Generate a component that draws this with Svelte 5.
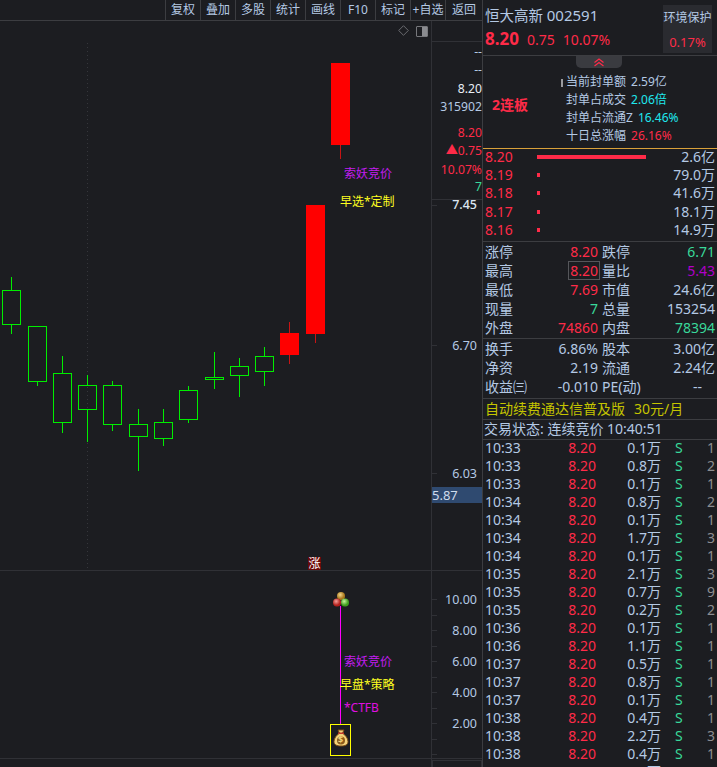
<script>
  // candles: x = left of body, top/bottom of body, hi/lo of wick
  const candles = [
    { x: 2, t: 290, b: 324, hi: 277, lo: 334 },
    { x: 28, t: 326, b: 381, hi: 326, lo: 386 },
    { x: 53, t: 373, b: 422, hi: 356, lo: 433 },
    { x: 78, t: 385, b: 409, hi: 375, lo: 442 },
    { x: 103, t: 385, b: 424, hi: 381, lo: 431 },
    { x: 129, t: 424, b: 436, hi: 409, lo: 471 },
    { x: 154, t: 422, b: 438, hi: 409, lo: 446 },
    { x: 179, t: 390, b: 419, hi: 386, lo: 423 },
    { x: 205, t: 377, b: 379, hi: 352, lo: 389 },
    { x: 230, t: 366, b: 375, hi: 358, lo: 397 },
    { x: 255, t: 356, b: 371, hi: 347, lo: 386 },
    { x: 280, t: 333, b: 355, hi: 322, lo: 364, up: true },
    { x: 306, t: 205, b: 334, hi: 205, lo: 343, up: true },
    { x: 331, t: 63, b: 145, hi: 63, lo: 159, up: true }
  ];

  const tools = ['复权', '叠加', '多股', '统计', '画线', 'F10', '标记', '+自选', '返回'];

  const axisInfo = [
    { y: 51, text: '--', cls: 'plain' },
    { y: 69, text: '--', cls: 'plain' },
    { y: 88, text: '8.20', cls: 'white' },
    { y: 106, text: '315902', cls: 'plain' },
    { y: 132, text: '8.20', cls: 'red' },
    { y: 150, text: '▲0.75', cls: 'red' },
    { y: 169, text: '10.07%', cls: 'red' },
    { y: 186, text: '7', cls: 'green' }
  ];
  const priceAxis = [
    { y: 204, text: '7.45', cls: 'bright' },
    { y: 345, text: '6.70', cls: '' },
    { y: 473, text: '6.03', cls: '' }
  ];
  const subAxis = [
    { y: 599, text: '10.00' },
    { y: 630, text: '8.00' },
    { y: 661, text: '6.00' },
    { y: 692, text: '4.00' },
    { y: 723, text: '2.00' }
  ];
  const subTicks = [599, 615, 630, 646, 661, 677, 692, 708, 723, 739, 754];

  const stats = [
    { label: '当前封单额', value: '2.59亿', cls: 'plain' },
    { label: '封单占成交', value: '2.06倍', cls: 'cyan' },
    { label: '封单占流通Z', value: '16.46%', cls: 'cyan' },
    { label: '十日总涨幅', value: '26.16%', cls: 'red' }
  ];

  const orders = [
    { price: '8.20', width: 109, vol: '2.6亿' },
    { price: '8.19', width: 3, vol: '79.0万' },
    { price: '8.18', width: 3, vol: '41.6万' },
    { price: '8.17', width: 3, vol: '18.1万' },
    { price: '8.16', width: 3, vol: '14.9万' }
  ];

  const quoteA = [
    ['涨停', '8.20', 'red', '跌停', '6.71', 'green'],
    ['最高', '8.20', 'red boxed', '量比', '5.43', 'violet'],
    ['最低', '7.69', 'red', '市值', '24.6亿', 'plain'],
    ['现量', '7', 'green', '总量', '153254', 'plain'],
    ['外盘', '74860', 'red', '内盘', '78394', 'green']
  ];
  const quoteB = [
    ['换手', '6.86%', 'plain', '股本', '3.00亿', 'plain'],
    ['净资', '2.19', 'plain', '流通', '2.24亿', 'plain'],
    ['收益㈢', '-0.010', 'plain', 'PE(动)', '--', 'plain dash']
  ];

  const ticks = [
    ['10:33', '0.1万', '1'], ['10:33', '0.8万', '2'], ['10:33', '0.1万', '1'],
    ['10:34', '0.8万', '2'], ['10:34', '0.1万', '1'], ['10:34', '1.7万', '3'],
    ['10:34', '0.1万', '1'], ['10:35', '2.1万', '3'], ['10:35', '0.7万', '9'],
    ['10:35', '0.2万', '2'], ['10:36', '0.1万', '1'], ['10:36', '1.1万', '1'],
    ['10:37', '0.5万', '1'], ['10:37', '0.8万', '1'], ['10:37', '0.1万', '1'],
    ['10:38', '0.4万', '1'], ['10:38', '2.2万', '3'], ['10:38', '0.4万', '1'],
    ['10:39', '1.0万', '1']
  ];
</script>

<div class="screen">
  <section class="left">
    <nav class="toolbar">
      {#each tools as tool}
        <span class="tool">{tool}</span>
      {/each}
    </nav>

    <div class="canvas">
      <svg class="chart" width="482" height="767" viewBox="0 0 482 767" shape-rendering="crispEdges">
        <line x1="87.5" y1="43" x2="87.5" y2="570" class="dots" />
        <line x1="431.5" y1="21" x2="431.5" y2="767" class="grid" />
        <line x1="0" y1="570.5" x2="482" y2="570.5" class="grid" />
        <line x1="432" y1="41.5" x2="482" y2="41.5" class="grid" />
        <line x1="432" y1="199.5" x2="482" y2="199.5" class="grid" />
        <line x1="432" y1="205.5" x2="437" y2="205.5" class="grid" />
        <line x1="432" y1="345.5" x2="437" y2="345.5" class="grid" />
        <line x1="432" y1="473.5" x2="437" y2="473.5" class="grid" />
        <line x1="0" y1="758.5" x2="482" y2="758.5" class="grid" />
        <rect x="432.5" y="760.5" width="49" height="10" class="grid" fill="none" />
        {#each subTicks as y}
          <line x1="432" y1={y + 0.5} x2="437" y2={y + 0.5} class="grid" />
        {/each}

        {#each candles as c}
          {#if c.up}
            <line x1={c.x + 9.5} y1={c.hi} x2={c.x + 9.5} y2={c.lo} class="wick-up" />
            <rect x={c.x} y={c.t} width="19" height={c.b - c.t} fill="#ff0000" />
          {:else}
            <line x1={c.x + 9.5} y1={c.hi} x2={c.x + 9.5} y2={c.t} class="wick-down" />
            <line x1={c.x + 9.5} y1={c.b} x2={c.x + 9.5} y2={c.lo} class="wick-down" />
            <rect x={c.x + 0.5} y={c.t + 0.5} width="18" height={c.b - c.t} fill="none" class="wick-down" />
          {/if}
        {/each}

        <!-- signal line in the lower chart -->
        <line x1="340.5" y1="606" x2="340.5" y2="725" stroke="#ff00ff" />
        <line x1="340" y1="686.5" x2="350" y2="686.5" stroke="#ffff00" />
        <rect x="330.5" y="724.5" width="20" height="31" fill="none" stroke="#ffff00" />
      </svg>

      <svg class="balls" width="18" height="18" viewBox="0 0 18 18">
        <defs>
          <radialGradient id="ballY" cx="40%" cy="35%"><stop offset="0" stop-color="#f2d68a" /><stop offset="1" stop-color="#a8781c" /></radialGradient>
          <radialGradient id="ballR" cx="40%" cy="35%"><stop offset="0" stop-color="#f4a09a" /><stop offset="1" stop-color="#b3201c" /></radialGradient>
          <radialGradient id="ballG" cx="40%" cy="35%"><stop offset="0" stop-color="#c8f4a0" /><stop offset="1" stop-color="#3f9e1e" /></radialGradient>
        </defs>
        <circle cx="9" cy="5" r="4" fill="url(#ballY)" />
        <circle cx="5" cy="11.5" r="4" fill="url(#ballR)" />
        <circle cx="13" cy="11.5" r="4" fill="url(#ballG)" />
      </svg>

      <svg class="bag" width="16" height="18" viewBox="0 0 16 18">
        <path d="M5 1h6l-1.500 3.200C12.600 6 15 9.500 15 12.500 15 16 12 17 8 17s-7-1-7-4.500C1 9.500 3.400 6 6.500 4.200z" fill="#f3d27a" stroke="#7a4a12" />
        <rect x="5" y="3.500" width="6" height="1.500" fill="#c0392b" />
        <circle cx="8" cy="11.500" r="4" fill="#8a5a1a" />
      </svg>
      <span class="bag-sign">$</span>

      <svg class="corner-diamond" width="11" height="11" viewBox="0 0 11 11">
        <path d="M5.500.7 10.300 5.500 5.500 10.300 .7 5.500z" fill="none" stroke="#6b6c70" />
      </svg>
      <span class="corner-panel"><i></i></span>

      <span class="sig purple s1">索妖竞价</span>
      <span class="sig yellow s2">早选*定制</span>
      <span class="sig purple s3">索妖竞价</span>
      <span class="sig yellow s4">早盘*策略</span>
      <span class="sig magenta s5">*CTFB</span>
      <span class="zhang">涨</span>

      {#each axisInfo as a}
        <span class="axis {a.cls}" style="top:{a.y}px">{a.text}</span>
      {/each}
      {#each priceAxis as a}
        <span class="axis price {a.cls}" style="top:{a.y}px">{a.text}</span>
      {/each}
      {#each subAxis as a}
        <span class="axis sub" style="top:{a.y}px">{a.text}</span>
      {/each}
      <span class="cur-price">5.87</span>
    </div>
  </section>

  <aside class="panel">
    <header class="head">
      <div class="head-main">
        <div class="name">恒大高新 <span>002591</span></div>
        <div class="nums">
          <b>8.20</b><span>0.75</span><span>10.07%</span>
        </div>
      </div>
      <div class="sector">
        <div>环境保护</div>
        <div class="red">0.17%</div>
      </div>
    </header>

    <div class="board">
      <div class="collapse">
        <svg width="12" height="9" viewBox="0 0 12 9" fill="none" stroke="#ff2b48" stroke-width="1.200">
          <path d="M1.500 4.500 6 1l4.500 3.500M1.500 8 6 4.500 10.500 8" />
        </svg>
      </div>
      <div class="lianban">2连板</div>
      <div class="stats">
        {#each stats as s}
          <div class="stat"><span>{s.label}</span><span class={s.cls}>{s.value}</span></div>
        {/each}
      </div>
      <i class="pin"></i>
    </div>

    <div class="orders">
      {#each orders as o}
        <div class="order">
          <span class="red o-price">{o.price}</span>
          <span class="o-bar"><i style="width:{o.width}px"></i></span>
          <span class="o-vol">{o.vol}</span>
        </div>
      {/each}
    </div>

    <div class="quote">
      {#each quoteA as q}
        <div class="q-row">
          <span>{q[0]}</span><span class="q-val"><em class={q[2]}>{q[1]}</em></span>
          <span class="q-label2">{q[3]}</span><span class="q-val"><em class={q[5]}>{q[4]}</em></span>
        </div>
      {/each}
    </div>

    <div class="quote second">
      {#each quoteB as q}
        <div class="q-row">
          <span>{q[0]}</span><span class="q-val"><em class={q[2]}>{q[1]}</em></span>
          <span class="q-label2">{q[3]}</span><span class="q-val"><em class={q[5]}>{q[4]}</em></span>
        </div>
      {/each}
    </div>

    <div class="promo">自动续费通达信普及版<span>30元/月</span></div>
    <div class="state">交易状态: 连续竞价 10:40:51</div>

    <div class="ticks">
      {#each ticks as t}
        <div class="tick">
          <span>{t[0]}</span>
          <span class="red t-price">8.20</span>
          <span class="t-vol">{t[1]}</span>
          <span class="green t-side">S</span>
          <span class="t-num">{t[2]}</span>
        </div>
      {/each}
    </div>
  </aside>
</div>

<style>
  :global(body) {
    margin: 0;
    background: #1c1d21;
  }
  .screen {
    width: 717px;
    height: 767px;
    display: flex;
    overflow: hidden;
    background: #1c1d21;
    color: #b4c9e4;
    font-family: "Noto Sans", "Noto Sans CJK SC", sans-serif;
    font-size: 14px;
  }
  .left {
    width: 482px;
    flex: none;
    display: flex;
    flex-direction: column;
  }
  .toolbar {
    height: 21px;
    box-sizing: border-box;
    flex: none;
    display: flex;
    justify-content: flex-end;
    border-bottom: 1px solid #3c3d41;
    font-size: 12px;
    line-height: 19px;
  }
  .tool {
    width: 35px;
    box-sizing: border-box;
    text-align: center;
    border-left: 1px solid #3c3d41;
    white-space: nowrap;
    overflow: hidden;
  }
  .tool:last-child { width: 37px; }
  .canvas {
    position: relative;
    flex: 1;
  }
  .chart {
    position: absolute;
    left: 0;
    top: -21px;
  }
  .grid { stroke: #303136; }
  .dots { stroke: #35363b; stroke-dasharray: 1 3; }
  .wick-down { stroke: #00ee00; }
  .wick-up { stroke: #c81414; }

  .balls { position: absolute; left: 332px; top: 570px; }
  .bag { position: absolute; left: 333px; top: 708px; }
  .bag-sign { position: absolute; left: 338px; top: 712px; font-size: 9px; line-height: 14px; color: #f3d27a; font-weight: 700; }
  .corner-diamond { position: absolute; left: 398px; top: 4px; }
  .corner-panel {
    position: absolute;
    left: 416px;
    top: 5px;
    width: 10px;
    height: 9px;
    border: 1px solid #77787c;
    border-radius: 1px;
  }
  .corner-panel i { position: absolute; right: 0; top: 0; bottom: 0; width: 5px; background: #8a8b8f; }

  .sig { position: absolute; font-size: 12px; line-height: 14px; white-space: nowrap; }
  .purple { color: #c21cf0; }
  .yellow { color: #ffff20; }
  .magenta { color: #e010e0; }
  .s1 { left: 344px; top: 146px; }
  .s2 { left: 340px; top: 174px; }
  .s3 { left: 344px; top: 634px; }
  .s4 { left: 340px; top: 657px; }
  .s5 { left: 344px; top: 680px; }
  .zhang {
    position: absolute;
    left: 308px;
    top: 536px;
    width: 13px;
    height: 13px;
    background: #6a0a0a;
    color: #fff;
    font-size: 12px;
    line-height: 13px;
    text-align: center;
  }

  .axis {
    position: absolute;
    right: 0;
    transform: translateY(-50%);
    margin-top: -20px;
    font-size: 12.200px;
    line-height: 16px;
    white-space: nowrap;
  }
  .plain { color: #b4c9e4; }
  .white { color: #e8eef5; }
  .red { color: #ff2b48; }
  .green { color: #39d99a; }
  .cyan { color: #1fe8ee; }
  .violet { color: #b000c8; }
  .axis.price { right: 5px; font-size: 12.500px; }
  .axis.bright { color: #dbe6f2; font-weight: 500; }
  .axis.sub { right: 5px; font-size: 12.500px; }
  .cur-price {
    position: absolute;
    left: 432px;
    top: 466px;
    width: 50px;
    height: 16px;
    background: #2f4a70;
    color: #cfdcec;
    font-size: 13px;
    line-height: 16px;
  }

  .panel {
    flex: 1;
    min-width: 0;
    border-left: 1px solid #3c3d41;
    display: flex;
    flex-direction: column;
  }
  .head {
    height: 56px;
    flex: none;
    display: flex;
    justify-content: space-between;
    border-bottom: 1px solid #3c3d41;
    box-sizing: border-box;
    padding: 5px 5px 0 2px;
  }
  .name { font-size: 14.500px; line-height: 20px; white-space: nowrap; }
  .name span { font-size: 15px; }
  .nums {
    display: flex;
    align-items: baseline;
    gap: 8px;
    margin-top: 4px;
    color: #ff2b48;
    font-size: 14px;
    line-height: 20px;
  }
  .nums b { font-size: 17px; }
  .sector {
    width: 49px;
    height: 48px;
    background: #2a2b30;
    font-size: 12px;
    text-align: center;
    line-height: 16px;
    padding-top: 5px;
    box-sizing: border-box;
    white-space: nowrap;
  }
  .sector .red { margin-top: 8px; font-size: 13px; }

  .board {
    position: relative;
    height: 93px;
    flex: none;
    box-sizing: border-box;
    border-bottom: 1px solid #d9a13a;
    display: flex;
    padding: 17px 0 0 9px;
  }
  .collapse {
    position: absolute;
    left: 93px;
    top: 0;
    width: 46px;
    height: 12px;
    background: #3a3b40;
    border-radius: 0 0 5px 5px;
    display: flex;
    justify-content: center;
    align-items: center;
  }
  .lianban {
    width: 74px;
    flex: none;
    color: #ff2b48;
    font-weight: 700;
    font-size: 14px;
    line-height: 18px;
    margin-top: 23px;
    white-space: nowrap;
  }
  .stats { font-size: 12px; line-height: 18px; }
  .stat { display: flex; gap: 5px; white-space: nowrap; }
  .pin {
    position: absolute;
    left: 78px;
    top: 23px;
    width: 2px;
    height: 8px;
    background: #9a9b9f;
  }

  .orders {
    height: 93px;
    flex: none;
    box-sizing: border-box;
    border-bottom: 1px solid #3c3d41;
  }
  .order {
    height: 18.200px;
    display: flex;
    align-items: center;
    padding: 0 2px;
    line-height: 18px;
  }
  .order:first-child { margin-top: -1px; }
  .o-price { width: 52px; flex: none; }
  .o-bar { flex: 1; display: flex; align-items: center; }
  .o-bar i { display: block; height: 4px; background: #ff2b48; }
  .o-vol { white-space: nowrap; }

  .quote {
    flex: none;
    box-sizing: border-box;
    height: 97px;
    border-bottom: 1px solid #3c3d41;
  }
  .quote.second { height: 60px; }
  .q-row {
    display: grid;
    grid-template-columns: 48px 65px 46px 1fr;
    height: 19px;
    line-height: 19px;
    padding: 0 2px;
    white-space: nowrap;
  }
  .q-val { text-align: right; }
  .q-label2 { padding-left: 4px; }
  .q-val em { font-style: normal; }
  .boxed {
    display: inline-block;
    border: 1px solid #55565a;
    line-height: 17px;
    padding: 0 1px;
    margin-right: -2px;
  }
  .dash { padding-right: 13px; }

  .promo {
    height: 21px;
    flex: none;
    box-sizing: border-box;
    border-bottom: 1px solid #3c3d41;
    color: #c4c400;
    font-size: 14px;
    line-height: 20px;
    padding-left: 2px;
    white-space: nowrap;
  }
  .promo span { margin-left: 9px; }
  .state {
    height: 20px;
    flex: none;
    box-sizing: border-box;
    border-bottom: 1px solid #3c3d41;
    font-size: 14px;
    line-height: 17px;
    padding-left: 1px;
    white-space: nowrap;
  }
  .ticks { margin-top: -1px; }
  .tick {
    display: grid;
    grid-template-columns: 46px 65px 65px 20px 1fr;
    height: 18px;
    line-height: 18px;
    padding: 0 2px;
  }
  .t-price, .t-vol { text-align: right; }
  .t-side { padding-left: 14px; }
  .t-num { text-align: right; color: #8c8d90; }
</style>
